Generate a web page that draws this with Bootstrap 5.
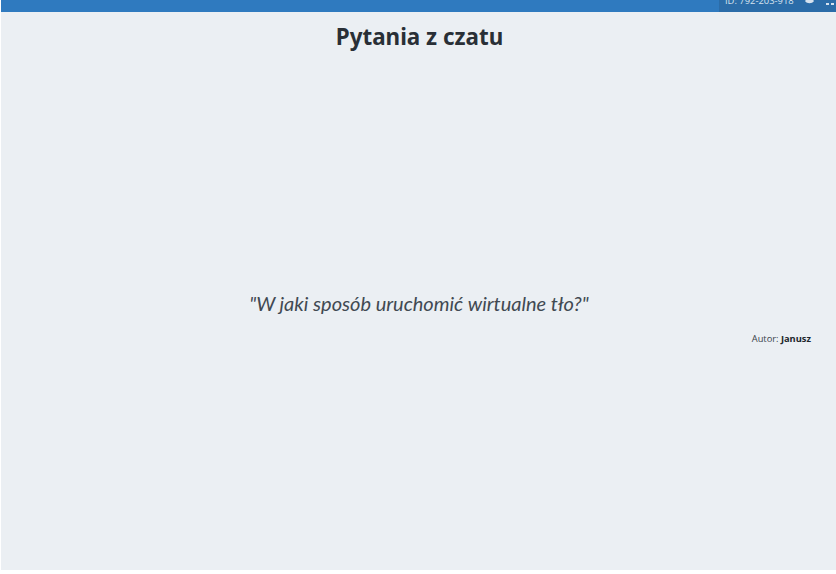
<!DOCTYPE html>
<html lang="pl">
<head>
<meta charset="utf-8">
<title>Pytania z czatu</title>
<link href="https://cdn.jsdelivr.net/npm/bootstrap@5.3.0/dist/css/bootstrap.min.css" rel="stylesheet">
<style>
html, body { height: 100%; background: #fff; overflow: hidden; }
body { font-family: "Open Sans", "Noto Sans", "Liberation Sans", sans-serif; padding: 0 0 4px 1px; }
.stage { height: 570px; background: #ebeff3; color: #292f36; }
.topbar { height: 12px; background: #2f7abf; overflow: hidden; }
.meeting { background: #2b6ca8; color: #d6e2ee; font-size: 9.4px; line-height: 12px; height: 12px; width: 117px; padding-left: 6px; white-space: nowrap; }
.meeting-id { position: relative; top: -5px; }
.meeting svg { flex: none; position: relative; top: -6px; }
.meeting .gap-eye { margin-left: 11px; }
.meeting .gap-dots { margin-left: 12px; }
.heading { font-family: "Noto Sans", "Open Sans", sans-serif; font-size: 22.4px; font-weight: 700; line-height: 32px; padding: 9px 0 0 2px; color: #292f36; }
.question { font-family: Lato, "Open Sans", sans-serif; font-style: italic; font-weight: 400; font-size: 20px; line-height: 28px; margin-top: 236px; padding-left: 1px; color: #414952; }
.author { font-size: 9.3px; line-height: 12px; margin-top: 16px; padding-right: 25px; color: #3a424b; }
.author b { color: #20262c; }
</style>
</head>
<body>
<div class="stage d-flex flex-column">
  <div class="topbar d-flex justify-content-end">
    <div class="meeting d-flex align-items-start">
      <span class="meeting-id">ID: 792-203-918</span>
      <svg class="gap-eye" width="9" height="12" viewBox="0 0 9 12"><path d="M0 7c2-3 7-3 9 0-2 3-7 3-9 0z" fill="#d6e2ee"/></svg>
      <svg class="gap-dots" width="8" height="12" viewBox="0 0 8 12"><rect x="0" y="9" width="3" height="2" fill="#d6e2ee"/><rect x="5" y="9" width="3" height="2" fill="#d6e2ee"/></svg>
    </div>
  </div>
  <h1 class="heading text-center m-0">Pytania z czatu</h1>
  <p class="question text-center mb-0">"W jaki sposób uruchomić wirtualne tło?"</p>
  <p class="author text-end mb-0">Autor: <b>Janusz</b></p>
</div>
<script src="https://cdn.jsdelivr.net/npm/bootstrap@5.3.0/dist/js/bootstrap.bundle.min.js"></script>
</body>
</html>
